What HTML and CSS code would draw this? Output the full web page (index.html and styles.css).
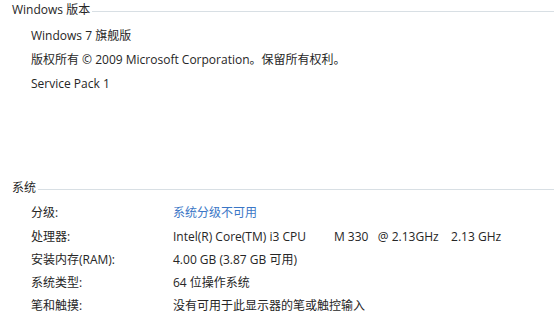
FILE: index.html
```html
<!DOCTYPE html>
<html lang="zh-CN">
<head>
<meta charset="utf-8">
<link rel="stylesheet" href="styles.css">
</head>
<body>
<section class="group first">
  <div class="group-title"><span>Windows 版本</span><i class="rule"></i></div>
  <div class="plain">Windows 7 旗舰版</div>
  <div class="plain">版权所有 © 2009 Microsoft Corporation。保留所有权利。</div>
  <div class="plain">Service Pack 1</div>
</section>
<section class="group second">
  <div class="group-title"><span>系统</span><i class="rule"></i></div>
  <div class="row"><span class="label">分级:</span><a class="value link">系统分级不可用</a></div>
  <div class="row"><span class="label">处理器:</span><span class="value">Intel(R) Core(TM) i3 CPU&nbsp;&nbsp;&nbsp;&nbsp;&nbsp;&nbsp;&nbsp;&nbsp;&nbsp;M 330&nbsp;&nbsp;&nbsp;@ 2.13GHz&nbsp;&nbsp;&nbsp;&nbsp;2.13 GHz</span></div>
  <div class="row"><span class="label">安装内存(RAM):</span><span class="value">4.00 GB (3.87 GB 可用)</span></div>
  <div class="row"><span class="label">系统类型:</span><span class="value">64 位操作系统</span></div>
  <div class="row"><span class="label">笔和触摸:</span><span class="value">没有可用于此显示器的笔或触控输入</span></div>
</section>
</body>
</html>
```
FILE: styles.css
```css
html, body {
  margin: 0;
  padding: 0;
  background: #ffffff;
}
body {
  font-family: "Open Sans", "Noto Sans CJK SC", sans-serif;
  font-size: 12px;
  color: #262626;
  width: 554px;
  height: 321px;
  overflow: hidden;
}
.group {
  display: flex;
  flex-direction: column;
}
.second {
  margin-top: 82px;
}
.group-title {
  display: flex;
  align-items: center;
  height: 18px;
  padding-left: 12px;
}
.group-title span {
  white-space: nowrap;
}
.rule {
  flex: 1;
  height: 0;
  border-top: 1px solid #d8dfe4;
  margin-left: 2px;
  margin-top: 4px;
}
.plain {
  height: 24px;
  line-height: 24px;
  padding-left: 31px;
  white-space: nowrap;
}
.first .group-title {
  margin-bottom: 6px;
}
.second .group-title {
  margin-bottom: 5.3px;
}
.row {
  display: flex;
  height: 23.3px;
  line-height: 23.3px;
  padding-left: 31px;
}
.label {
  width: 142px;
  flex: none;
}
.value {
  white-space: nowrap;
}
.link {
  color: #3a76c6;
}
```
